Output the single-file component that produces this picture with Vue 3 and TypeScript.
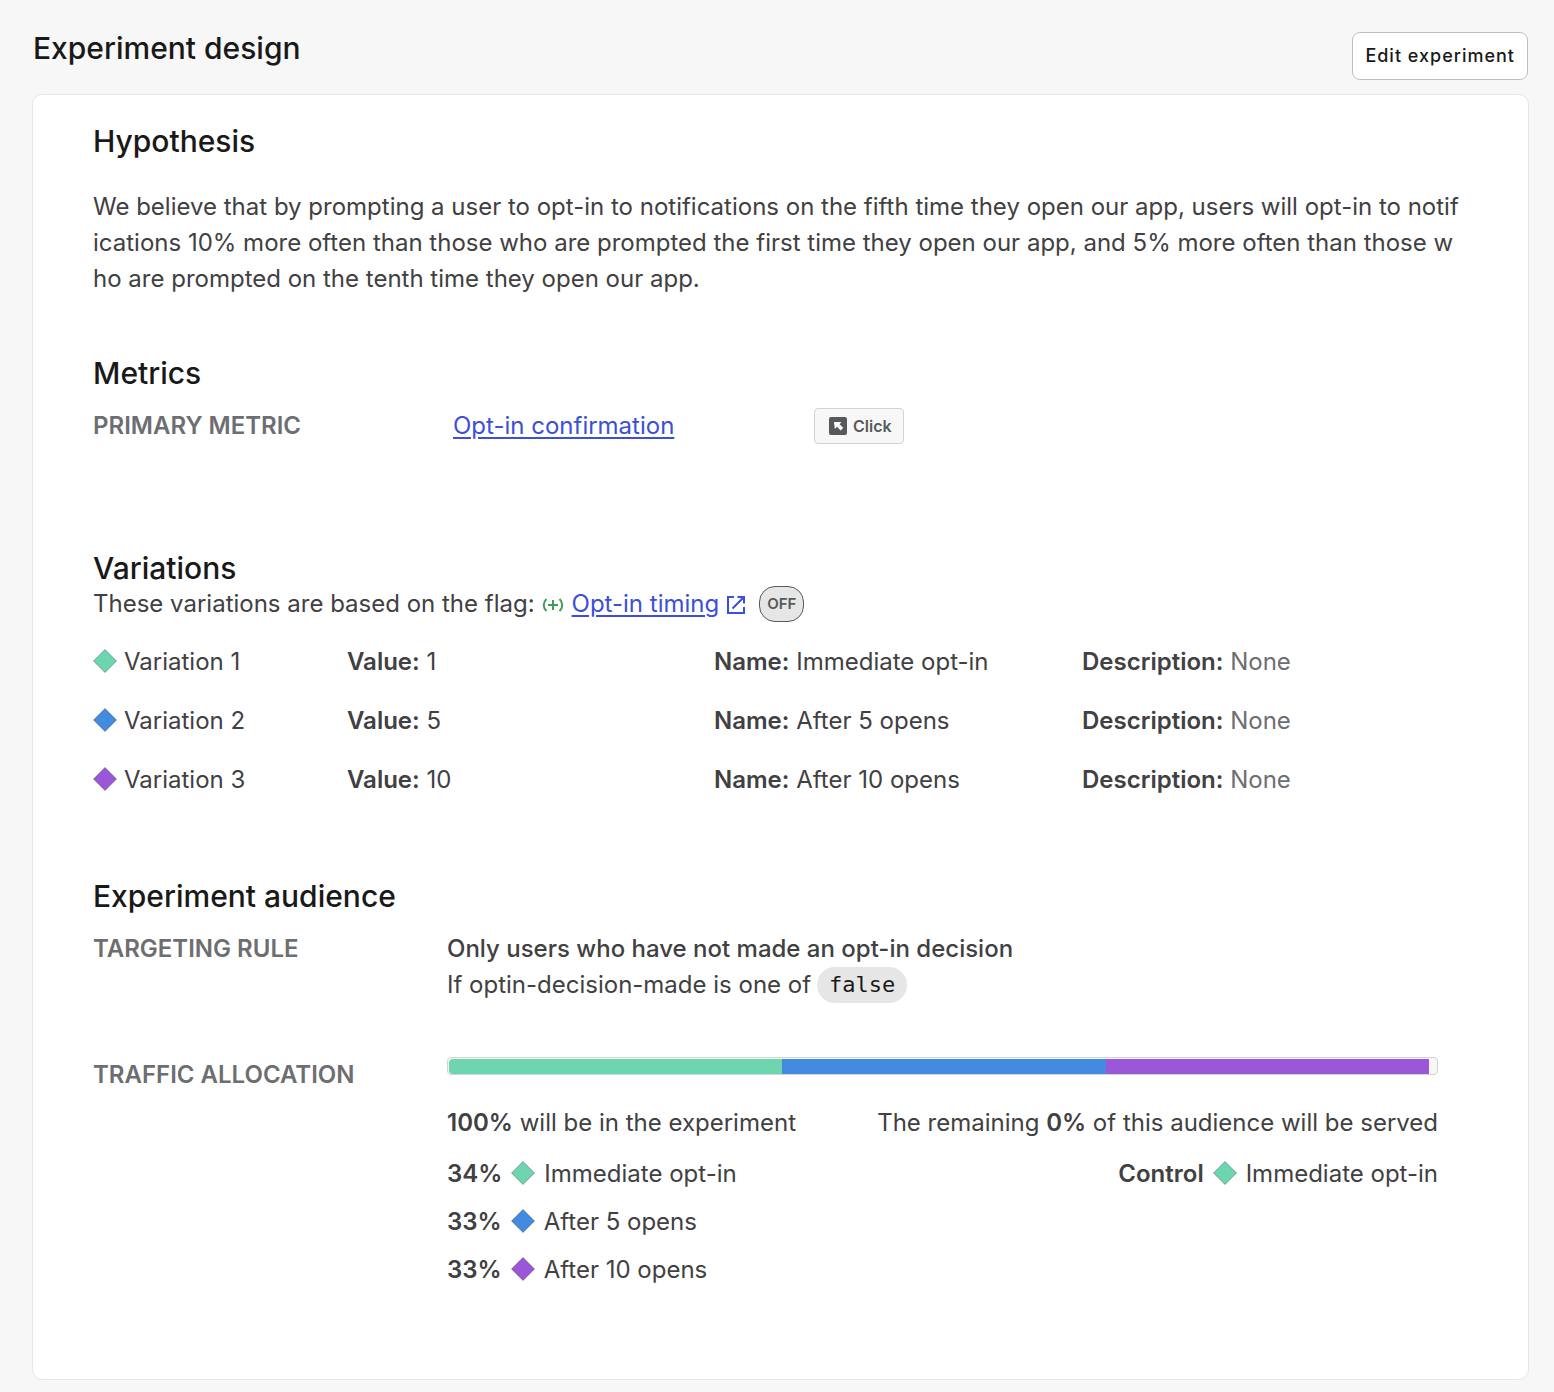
<script setup lang="ts">
interface Variation {
  id: number
  value: string
  name: string
  tone: string
  share: number
}

const variations: Variation[] = [
  { id: 1, value: '1', name: 'Immediate opt-in', tone: 'green', share: 34 },
  { id: 2, value: '5', name: 'After 5 opens', tone: 'blue', share: 33 },
  { id: 3, value: '10', name: 'After 10 opens', tone: 'purple', share: 33 },
]
</script>

<template>
  <main class="page">
    <header class="page-header">
      <h1>Experiment design</h1>
      <button type="button" class="edit">Edit experiment</button>
    </header>

    <div class="card">
      <section class="hypothesis">
        <h2>Hypothesis</h2>
        <p>We believe that by prompting a user to opt-in to notifications on the fifth time they open our app, users will opt-in to notifications 10% more often than those who are prompted the first time they open our app, and 5% more often than those who are prompted on the tenth time they open our app.</p>
      </section>

      <section class="metrics">
        <h2>Metrics</h2>
        <div class="metric-row">
          <h3>PRIMARY METRIC</h3>
          <div><a href="#metric">Opt-in confirmation</a></div>
          <div>
            <span class="kind">
              <svg width="18" height="18" viewBox="0 0 18 18" aria-hidden="true">
                <rect width="18" height="18" rx="2" fill="#58595b" />
                <path d="M5 5h7.500l-2 2.200 3.700 3.500-2.500 2.700-3.700-3.600-2.200 2.200z" fill="#fff" />
              </svg>
              Click
            </span>
          </div>
        </div>
      </section>

      <section class="variations">
        <h2>Variations</h2>
        <div class="flag-line">
          <span>These variations are based on the flag:</span>
          <svg class="flag-icon" width="22" height="16" viewBox="0 0 22 16" fill="none" stroke="#3f9f5a" stroke-width="2" aria-hidden="true">
            <path d="M4.500 2C.8 5.500.8 10.500 4.500 14M17.500 2c3.700 3.500 3.700 8.500 0 12M11 3v10M6 8h10" />
          </svg>
          <a href="#flag">Opt-in timing</a>
          <svg class="open-icon" width="20" height="20" viewBox="0 0 20 20" fill="none" stroke="#3b4fd8" stroke-width="2" aria-hidden="true">
            <path d="M8 2H2v16h16v-6M11.500 2H18v6.500M18 2L6.500 13.500" />
          </svg>
          <span class="off">OFF</span>
        </div>
        <ul class="variation-list">
          <li v-for="v in variations" :key="v.id">
            <span class="variation-name">
              <svg class="diamond" :class="v.tone" width="24" height="24" viewBox="0 0 24 24" aria-hidden="true"><path d="M12 .5L23.500 12 12 23.500.5 12z" /></svg>
              Variation {{ v.id }}
            </span>
            <span><b>Value:</b> {{ v.value }}</span>
            <span><b>Name:</b> {{ v.name }}</span>
            <span><b>Description:</b> <span class="none">None</span></span>
          </li>
        </ul>
      </section>

      <section class="audience">
        <h2>Experiment audience</h2>
        <div class="audience-row">
          <h3>TARGETING RULE</h3>
          <div>
            <p class="rule-name">Only users who have not made an opt-in decision</p>
            <p class="rule">If optin-decision-made is one of <code>false</code></p>
          </div>
        </div>
        <div class="audience-row traffic">
          <h3>TRAFFIC ALLOCATION</h3>
          <div>
            <div class="bar">
              <div v-for="v in variations" :key="v.id" :class="v.tone" :style="{ flexGrow: v.share }"></div>
            </div>
            <div class="split">
              <div>
                <p><b>100%</b> will be in the experiment</p>
                <ul class="shares">
                  <li v-for="v in variations" :key="v.id">
                    <b>{{ v.share }}%</b>
                    <svg class="diamond" :class="v.tone" width="24" height="24" viewBox="0 0 24 24" aria-hidden="true"><path d="M12 .5L23.500 12 12 23.500.5 12z" /></svg>
                    <span>{{ v.name }}</span>
                  </li>
                </ul>
              </div>
              <div>
                <p>The remaining <b>0%</b> of this audience will be served</p>
                <ul class="shares end">
                  <li>
                    <b>Control</b>
                    <svg class="diamond green" width="24" height="24" viewBox="0 0 24 24" aria-hidden="true"><path d="M12 .5L23.500 12 12 23.500.5 12z" /></svg>
                    <span>Immediate opt-in</span>
                  </li>
                </ul>
              </div>
            </div>
          </div>
        </div>
      </section>
    </div>
  </main>
</template>

<style>
body {
  margin: 0;
  background: #f7f7f7;
}
</style>

<style scoped>
.page {
  padding: 32px 25px 12px 32px;
  font-family: Inter, 'Liberation Sans', sans-serif;
  font-size: 24px;
  line-height: 36px;
  color: #414042;
}
h1,
h2,
h3,
p,
ul {
  margin: 0;
  padding: 0;
}
ul {
  list-style: none;
}
h1,
h2 {
  font-size: 30px;
  font-weight: 500;
  line-height: 34px;
  color: #191919;
}
h1 {
  line-height: 32px;
}
h3 {
  font-size: 24px;
  font-weight: 600;
  line-height: 36px;
  color: #6d6e71;
}
b {
  font-weight: 600;
}
a {
  color: #3b4fd8;
  text-underline-offset: 3px;
}
.page-header {
  display: flex;
  justify-content: space-between;
  align-items: flex-start;
  margin-bottom: 14px;
  padding: 0 1px;
}
.edit {
  box-sizing: border-box;
  height: 48px;
  padding: 0 12px 2px;
  border: 1px solid #bcbec0;
  border-radius: 8px;
  background: #fff;
  color: #191919;
  font: 500 18px Inter, 'Liberation Sans', sans-serif;
  letter-spacing: 1px;
}
.card {
  padding: 29px 60px 91px;
  border: 1px solid #e6e6e6;
  border-radius: 10px;
  background: #fff;
}
.hypothesis p {
  margin-top: 31px;
  padding-right: 6px;
  word-break: break-all;
}
.metrics {
  margin-top: 59px;
}
.metric-row {
  display: grid;
  grid-template-columns: 360fr 361fr 654fr;
  margin-top: 18px;
}
.kind {
  box-sizing: border-box;
  display: inline-flex;
  align-items: center;
  gap: 6px;
  height: 36px;
  padding: 0 11px 0 14px;
  border: 1px solid #d1d3d4;
  border-radius: 4px;
  background: #f7f7f7;
  color: #58595b;
  font-size: 16px;
  font-weight: 600;
  vertical-align: top;
}
.variations {
  margin-top: 107px;
}
.flag-line {
  display: flex;
  align-items: center;
  margin-top: 1px;
}
.flag-icon {
  margin: 2px 8px 0 7px;
}
.open-icon {
  margin: 2px 13px 0 7px;
}
.off {
  box-sizing: border-box;
  height: 36px;
  padding: 0 7px;
  border: 1px solid #58595b;
  border-radius: 16px;
  background: #e6e6e6;
  color: #58595b;
  font-size: 15px;
  font-weight: 600;
  line-height: 34px;
}
.variation-list {
  display: grid;
  gap: 23px;
  margin-top: 22px;
}
.variation-list li {
  display: grid;
  grid-template-columns: 254fr 367fr 368fr 386fr;
}
.variation-name {
  display: flex;
  align-items: center;
  gap: 7px;
}
.none {
  color: #6d6e71;
}
.diamond {
  flex: none;
  margin-bottom: 2px;
  stroke-width: 1;
  stroke: rgba(0, 0, 0, 0.3);
}
.diamond.green {
  fill: #6dd6ae;
}
.diamond.blue {
  fill: #438be0;
}
.diamond.purple {
  fill: #9a57d8;
}
.audience {
  margin-top: 81px;
}
.audience-row {
  display: grid;
  grid-template-columns: 354fr 991fr;
  margin-top: 18px;
  padding-right: 30px;
}
.audience-row.traffic {
  margin-top: 54px;
}
.rule-name {
  font-weight: 500;
}
.rule {
  display: flex;
  gap: 6px;
}
code {
  padding: 0 12px;
  border-radius: 18px;
  background: #e6e6e6;
  color: #191919;
  font-family: 'DejaVu Sans Mono', monospace;
  font-size: 22px;
}
.bar {
  box-sizing: border-box;
  display: flex;
  height: 18px;
  padding: 1px 8px 0 1px;
  border: 1px solid #d1d3d4;
  border-radius: 4px;
  background: #f7f7f7;
}
.bar div:first-child {
  border-radius: 4px 0 0 4px;
}
.bar .green {
  background: #6dd6ae;
}
.bar .blue {
  background: #438be0;
}
.bar .purple {
  background: #9a57d8;
}
.split {
  display: flex;
  justify-content: space-between;
  margin-top: 30px;
}
.shares {
  display: grid;
  gap: 12px;
  margin-top: 15px;
}
.shares li {
  display: flex;
  align-items: center;
  gap: 9px;
}
.shares.end li {
  justify-content: flex-end;
}
</style>
